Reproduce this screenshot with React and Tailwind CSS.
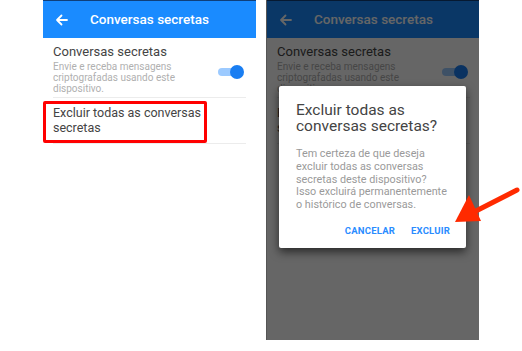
import React from "react";

function ArrowLeft({ color }) {
  return (
    <svg width="13" height="12" viewBox="0 0 13 12" fill="none">
      <path d="M12 6H2M6.5 1.5L2 6l4.5 4.5" stroke={color} strokeWidth="1.8" strokeLinecap="round" strokeLinejoin="round" />
    </svg>
  );
}

function Panel({ highlight }) {
  return (
    <div className="flex flex-col w-[213px] bg-white">
      <div className="h-[38px] bg-[#1a8bff] border-t border-[#0f3f7a] flex items-center">
        <div className="ml-[12px] w-[13px] flex"><ArrowLeft color="#ffffff" /></div>
        <div className="ml-[22px] text-[13.5px] font-medium text-white leading-none whitespace-nowrap">Conversas secretas</div>
      </div>
      <div className="mx-[10px] border-b border-[#ececec] flex items-start pt-[6px] pb-[3px]">
        <div className="flex-1">
          <div className="text-[13px] text-[#444] leading-[16px]">Conversas secretas</div>
          <div className="text-[10px] text-[#b0b0b0] leading-[11px] mt-[1px] w-[135px]">Envie e receba mensagens criptografadas usando este dispositivo.</div>
        </div>
        <div className="relative w-[26px] h-[14px] mt-[21px] mr-[2px]">
          <div className="absolute left-0 top-[3px] w-[22px] h-[8px] rounded-full bg-[#9ccaff]" />
          <div className="absolute right-0 top-0 w-[14px] h-[14px] rounded-full bg-[#1a7ef2]" />
        </div>
      </div>
      <div className="relative mx-[10px] border-b border-[#ececec] pt-[7px] pb-[8px]">
        <div className="text-[12.5px] text-[#444] leading-[15px] whitespace-nowrap">Excluir todas as conversas<br />secretas</div>
        {highlight && (
          <div className="absolute left-[-10px] top-[3px] w-[164px] h-[42px] border-[3px] border-[#ff0000] rounded-[2px]" />
        )}
      </div>
    </div>
  );
}

export default function App() {
  return (
    <div className="w-[522px] h-[351px] bg-white flex relative overflow-hidden" style={{ fontFamily: "Roboto, 'Liberation Sans', sans-serif" }}>
      <div className="ml-[43px]">
        <Panel highlight />
      </div>
      <div className="ml-[10px] relative w-[213px] h-[340px] bg-white overflow-hidden border-l border-[#555]">
        <Panel />
        <div className="absolute inset-0 bg-black/60" />
        <div className="absolute left-[12px] top-[86px] w-[187px] h-[162px] bg-white rounded-[2px] shadow-[0_4px_10px_rgba(0,0,0,0.6)] px-[17px] pt-[16px]">
          <div className="text-[15.5px] text-[#444] leading-[16px] whitespace-nowrap">Excluir todas as<br />conversas secretas?</div>
          <div className="mt-[14px] text-[10.8px] text-[#9a9a9a] leading-[12.8px] whitespace-nowrap">Tem certeza de que deseja<br />excluir todas as conversas<br />secretas deste dispositivo?<br />Isso excluirá permanentemente<br />o histórico de conversas.</div>
          <div className="flex justify-end gap-[16px] mt-[12px] mr-[-1px] text-[9.5px] font-bold text-[#2a8cff] tracking-[0.2px]">
            <span>CANCELAR</span>
            <span>EXCLUIR</span>
          </div>
        </div>
      </div>
      <svg className="absolute left-[450px] top-[185px]" width="72" height="45" viewBox="0 0 72 45">
        <path d="M67 5 L22 28" stroke="#ff2a00" strokeWidth="5" strokeLinecap="round" />
        <polygon points="5,37 19,10 31,36" fill="#ff2a00" />
      </svg>
    </div>
  );
}
